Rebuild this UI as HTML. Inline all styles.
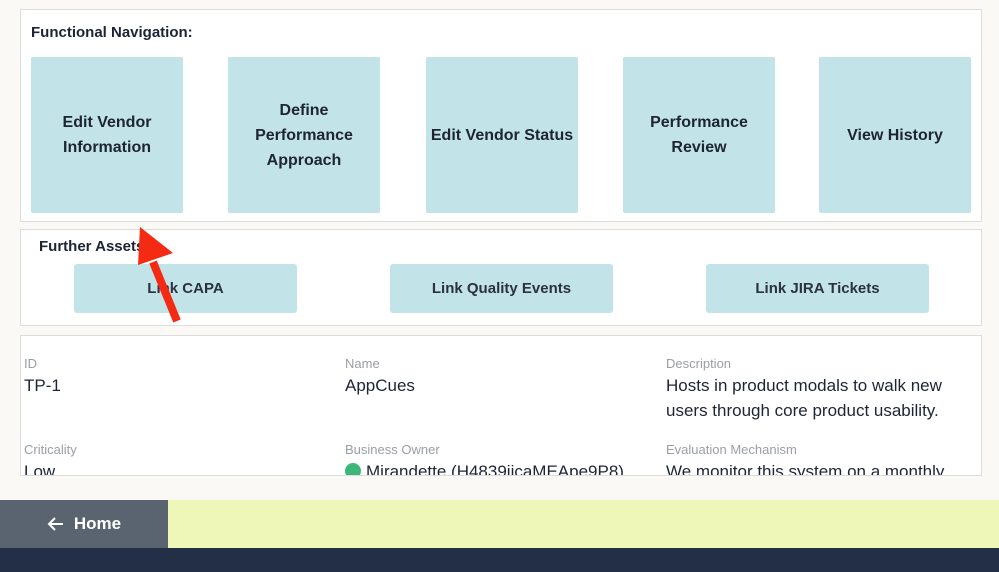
<!DOCTYPE html>
<html><head><style>
body{margin:0;width:999px;height:572px;background:#faf9f5;font-family:"Liberation Sans",sans-serif;position:relative;overflow:hidden;color:#1d2433}
.p{position:absolute;left:20px;width:962px;background:#fff;border:1px solid #ddd;box-sizing:border-box}
.t{position:absolute;top:57px;width:152px;height:156px;background:#c2e3e7;border-radius:2px;display:flex;align-items:center;justify-content:center;text-align:center;font-size:16px;font-weight:bold;line-height:25px;color:#1d2433}
.b{position:absolute;top:264px;width:223px;height:49px;background:#c2e3e7;border-radius:3px;display:flex;align-items:center;justify-content:center;font-size:15px;font-weight:bold;color:#2a3242}
.l{position:absolute;font-size:13px;color:#9a9ea5}
.v{position:absolute;font-size:17px;color:#1d2433;line-height:25px}
</style></head><body>
<div class="p" style="top:9px;height:213px"></div>
<div style="position:absolute;left:31px;top:24px;font-size:15px;font-weight:bold">Functional Navigation:</div>
<div class="t" style="left:31px">Edit Vendor<br>Information</div>
<div class="t" style="left:228px">Define<br>Performance<br>Approach</div>
<div class="t" style="left:426px">Edit Vendor Status</div>
<div class="t" style="left:623px">Performance<br>Review</div>
<div class="t" style="left:819px">View History</div>
<div class="p" style="top:229px;height:97px"></div>
<div style="position:absolute;left:39px;top:238px;font-size:15px;font-weight:bold">Further Assets</div>
<div class="b" style="left:74px">Link CAPA</div>
<div class="b" style="left:390px">Link Quality Events</div>
<div class="b" style="left:706px">Link JIRA Tickets</div>
<div class="p" style="top:335px;height:141px;overflow:hidden">
<div class="l" style="left:3px;top:20px">ID</div>
<div class="v" style="left:3px;top:37px">TP-1</div>
<div class="l" style="left:324px;top:20px">Name</div>
<div class="v" style="left:324px;top:37px">AppCues</div>
<div class="l" style="left:645px;top:20px">Description</div>
<div class="v" style="left:645px;top:37px">Hosts in product modals to walk new<br>users through core product usability.</div>
<div class="l" style="left:3px;top:106px">Criticality</div>
<div class="v" style="left:3px;top:123px">Low</div>
<div class="l" style="left:324px;top:106px">Business Owner</div>
<div class="v" style="left:324px;top:123px"><span style="display:inline-block;width:16px;height:16px;border-radius:50%;background:#3bb77a;vertical-align:-2px;margin-right:5px"></span>Mirandette (H4839jicaMEApe9P8)</div>
<div class="l" style="left:645px;top:106px">Evaluation Mechanism</div>
<div class="v" style="left:645px;top:123px">We monitor this system on a monthly</div>
</div>
<div style="position:absolute;left:0;top:500px;width:168px;height:48px;background:#5a6470;color:#fff;font-size:17px;font-weight:bold;display:flex;align-items:center;justify-content:center">
<svg width="18" height="16" viewBox="0 0 18 16" style="margin-right:9px"><path d="M16 8H2M8 2L2 8l6 6" stroke="#fff" stroke-width="2" fill="none"/></svg>Home</div>
<div style="position:absolute;left:168px;top:500px;width:831px;height:48px;background:#eff7b8"></div>
<div style="position:absolute;left:0;top:548px;width:999px;height:24px;background:#232f46"></div>
<svg style="position:absolute;left:0;top:0" width="999" height="572"><line x1="177" y1="321" x2="153" y2="262" stroke="#f42a12" stroke-width="8"/><polygon points="140,227 173,253 138,265" fill="#f42a12"/></svg>
</body></html>
